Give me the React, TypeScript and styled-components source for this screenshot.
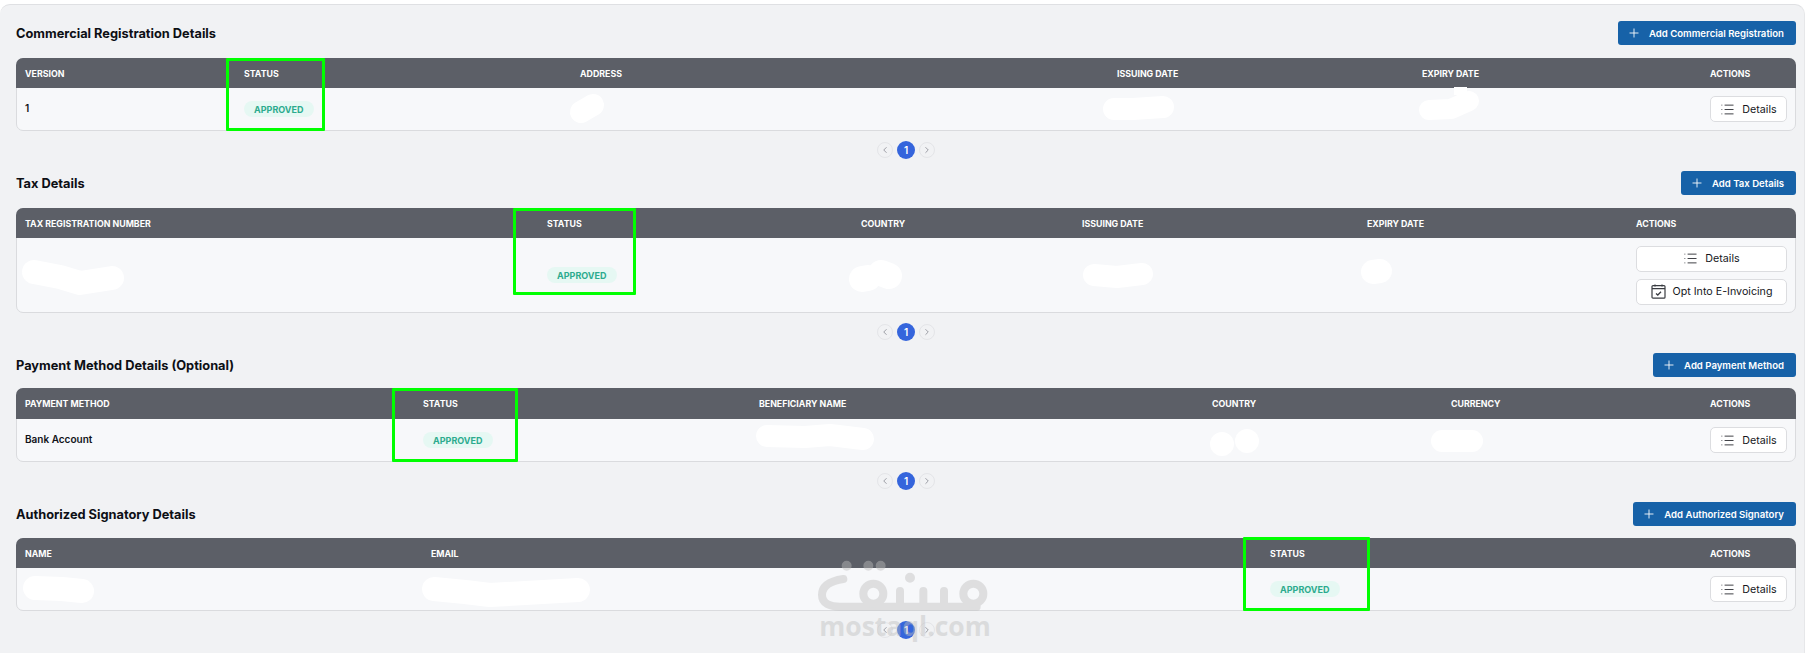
import styled, { createGlobalStyle } from "styled-components";
import { ChevronLeft, ChevronRight, List, Plus } from "lucide-react";

interface ScribbleData {
  left: number;
  top: number;
  w: number;
  h: number;
  d: string;
  sw: number;
  patch?: string;
}

interface CellData {
  text?: string;
  approved?: boolean;
  scribble?: ScribbleData;
  actions?: string[];
}

interface SectionData {
  title: string;
  addLabel: string;
  cols: string;
  gap: number;
  headerHeight: number;
  rowHeight: number;
  headers: string[];
  cells: CellData[];
  frame: { left: number; top: number; w: number; h: number };
}

const sections: SectionData[] = [
  {
    title: "Commercial Registration Details",
    addLabel: "Add Commercial Registration",
    cols: "219px 336px 537px 305px 288px 77px",
    gap: 13,
    headerHeight: 30,
    rowHeight: 42,
    headers: ["VERSION", "STATUS", "ADDRESS", "ISSUING DATE", "EXPIRY DATE", "ACTIONS"],
    cells: [
      { text: "1" },
      { approved: true },
      { scribble: { left: -11, top: 6, w: 36, h: 30, d: "M12 18 L24 11", sw: 22 } },
      { scribble: { left: -14, top: 8, w: 71, h: 24, d: "M11 13 L30 13 L60 11", sw: 22 } },
      {
        scribble: {
          left: -5,
          top: -1,
          w: 64,
          h: 34,
          d: "M12 23 L34 22 L52 14",
          sw: 20,
          patch: "M37 0 H50 V8 H37 Z",
        },
      },
      { actions: ["Details"] },
    ],
    frame: { left: 210, top: 0, w: 99, h: 73 },
  },
  {
    title: "Tax Details",
    addLabel: "Add Tax Details",
    cols: "522px 314px 221px 285px 269px 151px",
    gap: 13,
    headerHeight: 30,
    rowHeight: 74,
    headers: ["TAX REGISTRATION NUMBER", "STATUS", "COUNTRY", "ISSUING DATE", "EXPIRY DATE", "ACTIONS"],
    cells: [
      { scribble: { left: -5, top: 22, w: 105, h: 35, d: "M14 12 L40 17 L60 23 L92 18", sw: 24 } },
      { approved: true },
      { scribble: { left: -13, top: 20, w: 55, h: 35, d: "M14 21 L20 20 M33 15 L41 18", sw: 26 } },
      { scribble: { left: 0, top: 24, w: 72, h: 26, d: "M12 13 L35 15 L60 12", sw: 22 } },
      { scribble: { left: -6, top: 21, w: 31, h: 25, d: "M12 13 L19 12", sw: 24 } },
      { actions: ["Details", "Opt Into E-Invoicing"] },
    ],
    frame: { left: 497, top: 0, w: 123, h: 87 },
  },
  {
    title: "Payment Method Details (Optional)",
    addLabel: "Add Payment Method",
    cols: "398px 336px 453px 239px 259px 77px",
    gap: 11,
    headerHeight: 31,
    rowHeight: 42,
    headers: ["PAYMENT METHOD", "STATUS", "BENEFICIARY NAME", "COUNTRY", "CURRENCY", "ACTIONS"],
    cells: [
      { text: "Bank Account" },
      { approved: true },
      { scribble: { left: -4, top: 4, w: 121, h: 28, d: "M12 13 L50 14 L75 12 L108 16", sw: 22 } },
      { scribble: { left: -2, top: 9, w: 50, h: 27, d: "M12 16 L12 16 M37 13 L37 13", sw: 24 } },
      { scribble: { left: -21, top: 10, w: 54, h: 24, d: "M12 12 L42 12", sw: 22 } },
      { actions: ["Details"] },
    ],
    frame: { left: 376, top: 0, w: 126, h: 74 },
  },
  {
    title: "Authorized Signatory Details",
    addLabel: "Add Authorized Signatory",
    cols: "406px 839px 440px 77px",
    gap: 12,
    headerHeight: 30,
    rowHeight: 42,
    headers: ["NAME", "EMAIL", "STATUS", "ACTIONS"],
    cells: [
      { scribble: { left: -3, top: 7, w: 73, h: 28, d: "M13 13 L40 14 L60 16", sw: 24 } },
      { scribble: { left: -11, top: 8, w: 172, h: 30, d: "M14 13 L45 16 L70 19 L158 14", sw: 24 } },
      { approved: true },
      { actions: ["Details"] },
    ],
    frame: { left: 1227, top: -1, w: 127, h: 74 },
  },
];

const CalendarCheckIcon = () => (
  <svg width="15" height="15" viewBox="0 0 15 15" fill="none" stroke="#3a3c42" strokeWidth="1.2">
    <rect x="1" y="1.6" width="13" height="12.6" rx="1" />
    <path d="M1 4.6 H14 M4 0.4 V2.6 M11 0.4 V2.6" />
    <path d="M5 9.4 L6.8 11 L10 7.8" strokeWidth="1.3" />
  </svg>
);

const Logo = () => (
  <svg width="190" height="62" viewBox="0 0 570 186" fill="none" stroke="#bebebe" strokeLinecap="round">
    <g strokeWidth="24">
      <path d="M100 72 C60 78 36 92 36 120 C36 146 60 155 90 155 H500" />
      <circle cx="190" cy="116" r="30" />
      <circle cx="490" cy="116" r="30" />
      <path d="M270 108 V150 M340 108 V150 M402 108 V150" />
      <path d="M110 32 L110 32 M175 32 L175 32 M212 32 L212 32 M300 68 L300 68" strokeWidth="30" />
    </g>
  </svg>
);

const Scribble = ({ data }: { data: ScribbleData }) => (
  <ScribbleSvg $left={data.left} $top={data.top} width={data.w} height={data.h} fill="none">
    <path d={data.d} stroke="#ffffff" strokeWidth={data.sw} strokeLinecap="round" strokeLinejoin="round" />
    {data.patch && <path d={data.patch} fill="#ffffff" />}
  </ScribbleSvg>
);

const ActionButton = ({ label }: { label: string }) => (
  <OutlineButton>
    {label === "Details" ? <List size={15} strokeWidth={1.5} color="#33353b" /> : <CalendarCheckIcon />}
    <span>{label}</span>
  </OutlineButton>
);

const Cell = ({ cell }: { cell: CellData }) => (
  <BodyCell>
    {cell.text && <CellText>{cell.text}</CellText>}
    {cell.approved && <StatusPill>APPROVED</StatusPill>}
    {cell.scribble && <Scribble data={cell.scribble} />}
    {cell.actions && (
      <ActionStack>
        {cell.actions.map((a) => (
          <ActionButton key={a} label={a} />
        ))}
      </ActionStack>
    )}
  </BodyCell>
);

const Section = ({ section }: { section: SectionData }) => (
  <SectionWrapper>
    <TitleRow $gap={section.gap}>
      <Title>{section.title}</Title>
      <AddButton>
        <Plus size={14} strokeWidth={1.5} />
        <span>{section.addLabel}</span>
      </AddButton>
    </TitleRow>
    <TableWrap>
      <Card>
        <HeaderRow $cols={section.cols} $height={section.headerHeight}>
          {section.headers.map((h) => (
            <span key={h}>{h}</span>
          ))}
        </HeaderRow>
        <BodyRow $cols={section.cols} $height={section.rowHeight}>
          {section.cells.map((c, i) => (
            <Cell key={i} cell={c} />
          ))}
        </BodyRow>
      </Card>
      <GreenFrame $left={section.frame.left} $top={section.frame.top} $w={section.frame.w} $h={section.frame.h} />
    </TableWrap>
    <Pager>
      <PageArrow>
        <ChevronLeft size={10} />
      </PageArrow>
      <PageCurrent>1</PageCurrent>
      <PageArrow>
        <ChevronRight size={10} />
      </PageArrow>
    </Pager>
  </SectionWrapper>
);

const App = () => {
  return (
    <>
      <GlobalStyle />
      <Panel>
        {sections.map((s) => (
          <Section key={s.title} section={s} />
        ))}
      </Panel>
      <Watermark>
        <Logo />
        <WatermarkText>mostaql.com</WatermarkText>
      </Watermark>
    </>
  );
};

export default App;

const GlobalStyle = createGlobalStyle`
  html, body {
    margin: 0;
    height: 653px;
    overflow: hidden;
    background: #ffffff;
    font-family: "Inter", "Liberation Sans", sans-serif;
  }
  * {
    box-sizing: border-box;
  }
`;

const Panel = styled.div`
  margin: 4px 2px 0 0;
  height: 649px;
  padding: 16px 8px 0 16px;
  background: #f1f2f4;
  border-top: 1px solid #dfe0e3;
  border-right: 1px solid #e6e7e9;
  border-radius: 10px 10px 0 0;
  overflow: hidden;
`;

const SectionWrapper = styled.section`
  margin-bottom: 12px;
`;

const TitleRow = styled.div<{ $gap: number }>`
  display: flex;
  align-items: center;
  justify-content: space-between;
  height: 24px;
  margin-bottom: ${({ $gap }) => $gap}px;
`;

const Title = styled.h2`
  margin: 0;
  font-size: 12.8px;
  font-weight: 700;
  color: #0d0f14;
`;

const AddButton = styled.button`
  display: flex;
  align-items: center;
  gap: 8px;
  height: 24px;
  padding: 0 12px 0 9px;
  border: none;
  border-radius: 3px;
  background: #1762a8;
  color: #ffffff;
  font-family: inherit;
  font-size: 9.6px;
  font-weight: 600;
`;

const TableWrap = styled.div`
  position: relative;
`;

const Card = styled.div`
  border: 1px solid #dadbde;
  border-radius: 7px;
  background: #f7f8fa;
`;

const HeaderRow = styled.div<{ $cols: string; $height: number }>`
  display: grid;
  grid-template-columns: ${({ $cols }) => $cols};
  align-items: center;
  height: ${({ $height }) => $height}px;
  padding: 0 9px;
  margin: -1px -1px 0;
  border-radius: 7px 7px 0 0;
  background: #5c5f67;
  color: #ffffff;
  font-size: 8.8px;
  font-weight: 700;
  white-space: nowrap;
`;

const BodyRow = styled.div<{ $cols: string; $height: number }>`
  display: grid;
  grid-template-columns: ${({ $cols }) => $cols};
  align-items: stretch;
  height: ${({ $height }) => $height}px;
  padding: 0 8px;
`;

const BodyCell = styled.div`
  position: relative;
  display: flex;
  align-items: center;
`;

const CellText = styled.span`
  margin-top: -3px;
  font-size: 10px;
  font-weight: 600;
  color: #101218;
  white-space: nowrap;
`;

const ScribbleSvg = styled.svg<{ $left: number; $top: number }>`
  position: absolute;
  left: ${({ $left }) => $left}px;
  top: ${({ $top }) => $top}px;
  overflow: visible;
`;

const StatusPill = styled.span`
  display: inline-flex;
  align-items: center;
  height: 16px;
  padding: 0 10px;
  border-radius: 8px;
  background: #e6f8f3;
  color: #2cab8e;
  font-size: 9px;
  font-weight: 700;
`;

const ActionStack = styled.div`
  display: flex;
  flex-direction: column;
  gap: 7px;
  width: 100%;
`;

const OutlineButton = styled.button`
  display: flex;
  align-items: center;
  justify-content: center;
  gap: 7px;
  width: 100%;
  height: 26px;
  padding: 0;
  border: 1px solid #dcdde0;
  border-radius: 5px;
  background: #ffffff;
  color: #15171c;
  font-family: inherit;
  font-size: 10.7px;
  font-weight: 400;
  white-space: nowrap;
`;

const GreenFrame = styled.div<{ $left: number; $top: number; $w: number; $h: number }>`
  position: absolute;
  left: ${({ $left }) => $left}px;
  top: ${({ $top }) => $top}px;
  width: ${({ $w }) => $w}px;
  height: ${({ $h }) => $h}px;
  border: 3px solid #00ff00;
  border-radius: 1px;
  pointer-events: none;
`;

const Pager = styled.div`
  display: flex;
  align-items: center;
  justify-content: center;
  gap: 4px;
  height: 18px;
  margin-top: 10px;
`;

const PageArrow = styled.span`
  display: flex;
  align-items: center;
  justify-content: center;
  width: 16px;
  height: 16px;
  border: 1px solid #e4e5e8;
  border-radius: 50%;
  background: #f1f2f4;
  color: #8b8e96;
`;

const PageCurrent = styled.span`
  display: flex;
  align-items: center;
  justify-content: center;
  width: 18px;
  height: 18px;
  border-radius: 50%;
  background: #3565dc;
  color: #ffffff;
  font-size: 10px;
  font-weight: 600;
`;

const Watermark = styled.div`
  position: absolute;
  left: 810px;
  top: 555px;
  display: flex;
  flex-direction: column;
  align-items: center;
  width: 190px;
  opacity: 0.43;
  pointer-events: none;
`;

const WatermarkText = styled.span`
  margin-top: -1px;
  font-family: "Open Sans", sans-serif;
  font-size: 26.5px;
  font-weight: 700;
  line-height: 21px;
  color: #bebebe;
  white-space: nowrap;
`;
